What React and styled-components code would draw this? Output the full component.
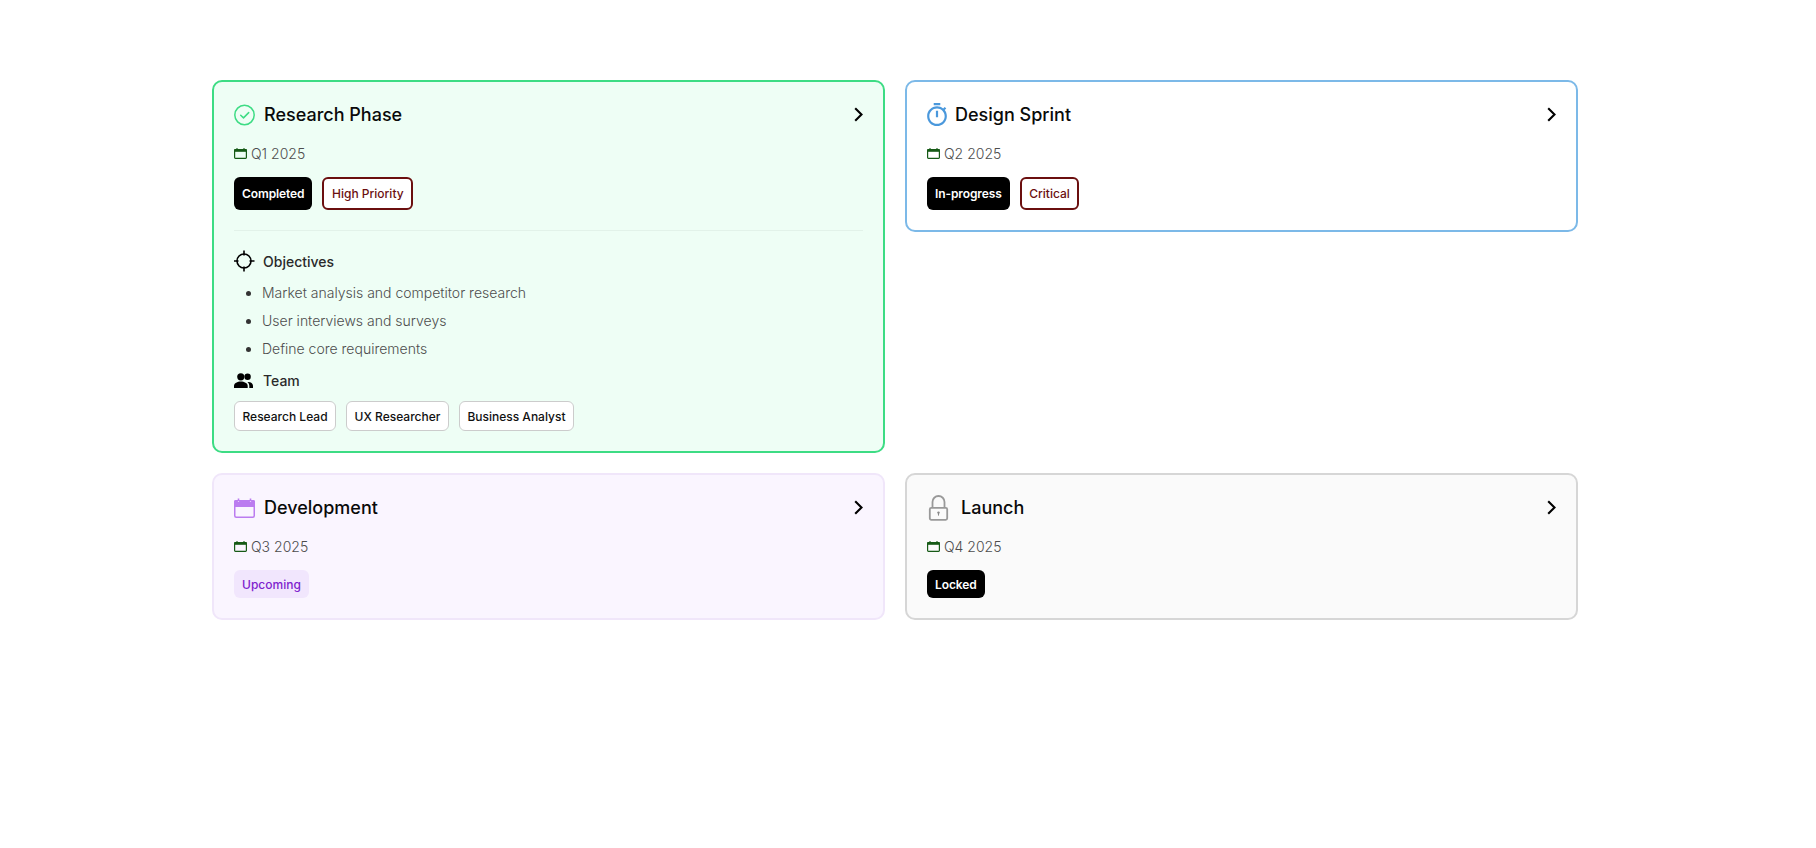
import React from "react";
import styled, { createGlobalStyle } from "styled-components";

const GlobalStyle = createGlobalStyle`
    html, body {
        margin: 0;
        padding: 0;
        background: #ffffff;
        font-family: "Inter", "Liberation Sans", sans-serif;
    }
`;

const Page = styled.div`
    min-height: 848px;
    box-sizing: border-box;
    padding: 80px 238px 0 212px;
`;

const Grid = styled.div`
    display: grid;
    grid-template-columns: 673px 673px;
    gap: 20px;
    align-items: start;
`;

const Card = styled.div`
    box-sizing: border-box;
    padding: 20px;
    border-radius: 10px;
    border: 2px solid ${({ $border }) => $border};
    background: ${({ $bg }) => $bg};
`;

const Header = styled.div`
    display: flex;
    align-items: center;
    justify-content: space-between;
    height: 25px;
`;

const TitleGroup = styled.div`
    display: flex;
    align-items: center;
    gap: 8px;
`;

const Title = styled.div`
    font-size: 18px;
    font-weight: 500;
    color: #0a0a0a;
`;

const Quarter = styled.div`
    display: flex;
    align-items: center;
    gap: 4px;
    margin-top: 16px;
    height: 20px;
    font-size: 14px;
    font-weight: 300;
    color: #4d4d4d;
`;

const Badges = styled.div`
    display: flex;
    gap: 10px;
    margin-top: 14px;
`;

const Badge = styled.div`
    box-sizing: border-box;
    display: flex;
    align-items: center;
    height: ${({ $short }) => ($short ? "28px" : "33px")};
    padding: 0 8px;
    border-radius: 6px;
    font-size: 12px;
    font-weight: 600;
    letter-spacing: -0.1px;
    background: #000;
    color: #fff;
`;

const OutlineBadge = styled(Badge)`
    padding: 0 7.5px;
    font-weight: 500;
    letter-spacing: 0;
    background: #fff;
    color: #6b0f0f;
    border: 2px solid #6b0f0f;
`;

const SoftBadge = styled(Badge)`
    font-weight: 500;
    letter-spacing: 0;
    background: #f1e6fd;
    color: #7e22ce;
`;

const Divider = styled.div`
    height: 1px;
    margin: 20px 0 19px;
    background: #e2f2e9;
`;

const SectionTitle = styled.div`
    display: flex;
    align-items: center;
    gap: 8px;
    height: 22px;
    font-size: 14px;
    font-weight: 500;
    color: #2a2a2a;
`;

const List = styled.ul`
    margin: 7px 0 6px;
    padding: 0 0 0 28px;
    list-style: disc;
`;

const Item = styled.li`
    height: 28px;
    line-height: 28px;
    font-size: 14px;
    font-weight: 300;
    color: #4d4d4d;
    &::marker { color: #333; }
`;

const TeamRow = styled.div`
    display: flex;
    gap: 10px;
    margin-top: 10px;
`;

const Chip = styled.div`
    box-sizing: border-box;
    display: flex;
    align-items: center;
    height: 30px;
    padding: 0 7.5px;
    border: 1px solid #cccccc;
    border-radius: 6px;
    background: #fff;
    font-size: 12px;
    font-weight: 500;
    color: #111;
`;

const CheckIcon = () => (
    <svg width="22" height="22" viewBox="0 0 22 22" fill="none" stroke="#3ddc84" strokeWidth="1.5" strokeLinecap="round" strokeLinejoin="round">
        <circle cx="10.5" cy="11" r="9.7" />
        <path d="M6.7 11.3l2.8 2.6 5.2-5.3" />
    </svg>
);

const TimerIcon = () => (
    <svg width="20" height="23" viewBox="3 1 18 21" fill="#4a98dc">
        <path d="M15 1H9v2h6V1zm-4 13h2V8h-2v6zm8.03-6.61 1.42-1.42c-.43-.51-.9-.99-1.41-1.41l-1.42 1.42C16.07 4.74 14.12 4 12 4c-4.97 0-9 4.03-9 9s4.02 9 9 9 9-4.03 9-9c0-2.12-.74-4.07-1.97-5.61zM12 20c-3.87 0-7-3.13-7-7s3.13-7 7-7 7 3.13 7 7-3.13 7-7 7z" />
    </svg>
);

const PurpleCalendar = () => (
    <svg width="22" height="22" viewBox="0 0 22 22">
        <path d="M0 4.5A1.5 1.5 0 0 1 1.5 3h18A1.5 1.5 0 0 1 21 4.5V10H0z" fill="#bb7cf0" />
        <rect x="0.75" y="3.75" width="19.5" height="16.5" rx="1.5" fill="none" stroke="#bb7cf0" strokeWidth="1.5" />
        <path d="M4.5 1.5v3M16.5 1.5v3" stroke="#bb7cf0" strokeWidth="1.6" />
        <path d="M4.5 4v1M16.5 4v1" stroke="#e3c6fa" strokeWidth="1.2" />
    </svg>
);

const LockIcon = () => (
    <svg width="26" height="26" viewBox="0 0 26 26" fill="none" stroke="#999" strokeWidth="1.8">
        <rect x="2.8" y="12.8" width="17.4" height="12" rx="1.5" />
        <path d="M5.5 12.8V7a6 6 0 0 1 12 0v5.8" />
        <circle cx="11.5" cy="17.6" r="1.2" fill="#888" stroke="none" />
        <path d="M11.5 18v2.6" stroke="#888" strokeWidth="1.1" />
    </svg>
);

const SmallCalendar = () => (
    <svg width="13" height="13" viewBox="0 0 13 13">
        <rect x="0.6" y="2.6" width="11.8" height="8.8" fill="none" stroke="#165a16" strokeWidth="1.2" rx="0.8" />
        <rect x="0.5" y="2" width="12" height="2.8" fill="#165a16" />
        <path d="M3 1v1.5M10 1v1.5" stroke="#165a16" strokeWidth="1.1" />
    </svg>
);

const TargetIcon = () => (
    <svg width="21" height="22" viewBox="0 0 21 22" fill="none" stroke="#000" strokeWidth="1.6">
        <circle cx="10" cy="11" r="7" />
        <path d="M10 .5v5M10 16.5v5M-.5 11h5M15.5 11h5" />
    </svg>
);

const TeamIcon = () => (
    <svg width="21" height="15" viewBox="0 0 21 15" fill="#000">
        <circle cx="6.8" cy="3.8" r="3.6" />
        <circle cx="13.6" cy="3.8" r="3.2" />
        <path d="M0 15v-2c0-3 3.4-4.5 6.8-4.5s6.9 1.5 6.9 4.5v2z" />
        <path d="M15.3 15v-2.2c0-1.6-.7-2.9-1.9-3.8 2.9-.4 5.6 1 5.6 3.8V15z" />
    </svg>
);

const Chevron = () => (
    <svg width="9" height="15" viewBox="0 0 9 15" fill="none" stroke="#000" strokeWidth="2.1" strokeLinejoin="miter">
        <path d="M1.2 1.2 7.5 7.5l-6.3 6.3" />
    </svg>
);

const CardHead = ({ icon, title, quarter }) => (
    <>
        <Header>
            <TitleGroup>
                {icon}
                <Title>{title}</Title>
            </TitleGroup>
            <Chevron />
        </Header>
        <Quarter>
            <SmallCalendar />
            {quarter}
        </Quarter>
    </>
);

const App = () => (
    <Page>
        <GlobalStyle />
        <Grid>
            <Card $border="#3ddc84" $bg="#eefef5">
                <CardHead icon={<CheckIcon />} title="Research Phase" quarter="Q1 2025" />
                <Badges>
                    <Badge>Completed</Badge>
                    <OutlineBadge>High Priority</OutlineBadge>
                </Badges>
                <Divider />
                <SectionTitle>
                    <TargetIcon />
                    Objectives
                </SectionTitle>
                <List>
                    <Item>Market analysis and competitor research</Item>
                    <Item>User interviews and surveys</Item>
                    <Item>Define core requirements</Item>
                </List>
                <SectionTitle>
                    <TeamIcon />
                    Team
                </SectionTitle>
                <TeamRow>
                    <Chip>Research Lead</Chip>
                    <Chip>UX Researcher</Chip>
                    <Chip>Business Analyst</Chip>
                </TeamRow>
            </Card>
            <Card $border="#7cb9e8" $bg="#ffffff">
                <CardHead icon={<TimerIcon />} title="Design Sprint" quarter="Q2 2025" />
                <Badges>
                    <Badge>In-progress</Badge>
                    <OutlineBadge>Critical</OutlineBadge>
                </Badges>
            </Card>
            <Card $border="#f0e6fa" $bg="#faf5ff">
                <CardHead icon={<PurpleCalendar />} title="Development" quarter="Q3 2025" />
                <Badges>
                    <SoftBadge $short>Upcoming</SoftBadge>
                </Badges>
            </Card>
            <Card $border="#d6d6d6" $bg="#fafafa">
                <CardHead icon={<LockIcon />} title="Launch" quarter="Q4 2025" />
                <Badges>
                    <Badge $short>Locked</Badge>
                </Badges>
            </Card>
        </Grid>
    </Page>
);

export default App;
